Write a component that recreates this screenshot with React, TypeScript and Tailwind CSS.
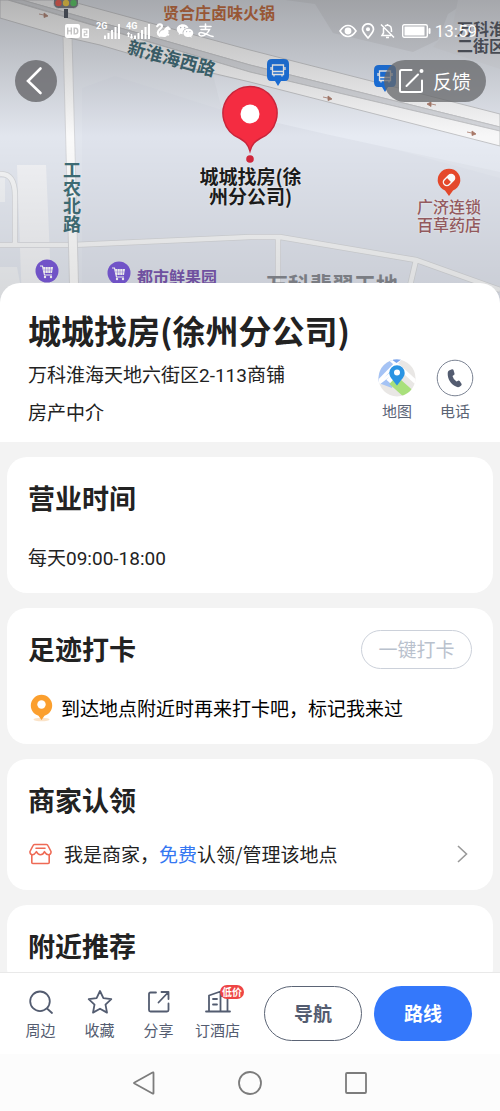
/**
 * Place detail page: map header, info sheet, cards and bottom action bar
 */
import type { ReactNode } from 'react';
import { RiWechatFill } from 'react-icons/ri';

export default function PlaceDetailPage() {
  return (
    <div className="h-screen flex flex-col overflow-hidden bg-[#f3f3f3] text-[#222] font-['Noto_Sans_CJK_SC',sans-serif]">
      <main className="flex-1 min-h-0 overflow-hidden">
        <MapHeader />
        <PlaceSheet />

        <div className="flex flex-col gap-[15px] px-[7px] pt-[15px]">
          <Card title="营业时间">
            <p className="mt-[25px] text-[19px] leading-7">
              每天<Digits>09:00-18:00</Digits>
            </p>
          </Card>

          <Card
            title="足迹打卡"
            action={
              <button
                type="button"
                className="w-[111px] h-[39px] rounded-full border border-[#ccd1da] text-[19px] text-[#b9c1cd]"
              >
                一键打卡
              </button>
            }
          >
            <div className="mt-[25px] flex items-center gap-2">
              <CheckInPin />
              <p className="text-[19px] leading-7 text-black">到达地点附近时再来打卡吧，标记我来过</p>
            </div>
          </Card>

          <Card title="商家认领">
            <a href="#claim" className="mt-5 flex items-center">
              <ShopIcon />
              <span className="ml-3 text-[19px] leading-7">
                我是商家，<span className="text-[#3577f2]">免费</span>认领/管理该地点
              </span>
              <svg className="ml-auto w-5 h-5" viewBox="0 0 20 20" fill="none" stroke="#999" strokeWidth="1.6" aria-hidden="true">
                <path d="M6 2l8.500 8L6 18" />
              </svg>
            </a>
          </Card>

          <Card title="附近推荐" />
        </div>
      </main>

      <ActionBar />
      <SystemNav />
    </div>
  );
}

// leading-none keeps the second font from growing the line box
function Digits({ children }: { children: ReactNode }) {
  return <span className="leading-none font-['Roboto',sans-serif]">{children}</span>;
}

// ─── Map header ───────────────────────────────────────────────────────────────

function MapHeader() {
  return (
    <header className="relative h-[303px] overflow-hidden bg-[#e2e6ee]">
      {/* Map canvas, stays centered on the selected place */}
      <div className="absolute top-0 left-1/2 -translate-x-1/2 w-[500px] h-full font-bold whitespace-nowrap">
        <MapDrawing />
        <span className="absolute left-[163px] top-0 text-[16px] leading-6 text-[#c05a26]">贤合庄卤味火锅</span>
        <span className="absolute left-[127px] top-[45px] rotate-[15deg] text-[18px] leading-6 text-[#31606d]">新淮海西路</span>
        <span className="absolute left-[63px] top-[160px] w-[18px] whitespace-normal text-[18px] leading-[18px] text-[#3f6d76]">工农北路</span>
        <span className="absolute left-[199px] top-[166px] w-[103px] text-center text-[19px] leading-5 text-[#1c1c1c] [text-shadow:0_0_2px_#fff]">
          城城找房(徐
          <br />
          州分公司)
        </span>
        <span className="absolute left-[417px] top-[197px] text-[16px] leading-[18px] font-medium text-[#9a5e63] [text-shadow:0_0_2px_#fff]">
          广济连锁
          <br />
          百草药店
        </span>
        <span className="absolute left-[457px] top-[20px] text-[16px] leading-[17px] text-[#444954]">
          万科淮海
          <br />
          二街区
        </span>
        <span className="absolute left-[137px] top-[264px] text-[16px] leading-6 text-[#7958ae]">都市鲜果园</span>
        <span className="absolute left-[266px] top-[271px] text-[22px] leading-6 text-[#85888f]">万科翡翠天地</span>
      </div>
      <div className="absolute inset-0 bg-linear-to-b from-[#505050]/40 via-transparent via-45% to-black/10" />
      <div className="absolute top-[85px] left-1/2 -translate-x-1/2">
        <SelectedPin />
      </div>

      <div className="relative">
        <StatusBar />
        <div className="mt-5 pl-[15px] pr-[14px] flex justify-between">
          <button type="button" aria-label="返回" className="w-[42px] h-[42px] rounded-full bg-[#66676a]/80 flex items-center justify-center">
            <svg className="w-[42px] h-[42px]" viewBox="0 0 42 42" fill="none" stroke="#fff" strokeWidth="2.600" strokeLinecap="round" aria-hidden="true">
              <path d="M25.500 8.500L13 21l12.500 12" />
            </svg>
          </button>
          <button type="button" className="w-[102px] h-[42px] rounded-full bg-[#66676a]/75 flex items-center pl-[14px] gap-[9px] text-[19px] text-white">
            <svg className="w-[26px] h-[26px]" viewBox="0 0 26 26" fill="none" stroke="#fff" strokeWidth="2" strokeLinecap="round" strokeLinejoin="round" aria-hidden="true">
              <path d="M13.500 2H3.500Q2 2 2 3.500v19Q2 24 3.500 24h19q1.500 0 1.500-1.500V12.500M8.500 18L20 6.500" />
              <circle cx="23.500" cy="3" r="1" fill="#fff" />
            </svg>
            反馈
          </button>
        </div>
      </div>
    </header>
  );
}

function StatusBar() {
  return (
    <div className="h-10 pt-[21px] pl-[65px] pr-[23px] flex items-center text-white">
      <svg className="w-[25px] h-4" viewBox="0 0 25 16" aria-hidden="true">
        <path fill="#fff" fillRule="evenodd" d="M2 1h11q2 0 2 2v10q0 2-2 2H2q-2 0-2-2V3Q0 1 2 1ZM2 4.500v7h1.400V8.600h2.200v2.900H7v-7H5.600v2.800H3.400V4.500ZM8.500 4.500v7h2q3 0 3-3.500t-3-3.500ZM10 5.800q2 0 2 2.200t-2 2.200Z" />
        <path fill="#fff" fillRule="evenodd" d="M18 5.500h5q1 0 1 1V14q0 1-1 1h-5q-1 0-1-1V6.500q0-1 1-1ZM18.700 7.200v1h2.400v1.500h-2.400v3.500h3.700v-1h-2.500v-1.500h2.500V7.200Z" />
      </svg>
      <Signal label="2G" className="ml-[6px]" />
      <Signal label="4G" className="ml-[6px]" data />
      <svg className="ml-[6px] w-[15px] h-[15px]" viewBox="0 0 15 15" aria-hidden="true">
        <path d="M1.200 3.200C2.500.8 5.800.9 6 3.200c.2 2.300-4.200 3-4.200 6.300 0 1.500.7 2.500 1.700 3" fill="none" stroke="#fff" strokeWidth="2.200" strokeLinecap="round" />
        <path d="M3 13.500c-.5-3.500 1.500-6.500 5-6.500.5-2 1.800-3.200 3.300-3.300l.7-1.200.8 1.400c1.200.4 1.900 1.300 2.100 2.400-.8.700-1.800.8-2.700.8.600 1.200.6 2.600 0 3.700l1.300.7-1 1.300-1.500-.4c-.6 1-1.600 1.700-3 1.700Z" fill="#fff" />
      </svg>
      <RiWechatFill className="ml-[5px] w-[18px] h-[18px]" aria-hidden="true" />
      <svg className="ml-1 w-[16px] h-[15px]" viewBox="0 0 16 15" fill="none" stroke="#fff" strokeWidth="1.600" strokeLinecap="round" aria-hidden="true">
        <path d="M2 3.500h11M7.500 1v5.500M3 6.500h8.500C10 10 6.500 13 3.500 13c-3 0-3.500-3.500-.5-3.500 3.500 0 7.500 3.200 12 4" />
      </svg>

      <div className="ml-auto flex items-center">
        <svg className="w-[18px] h-4" viewBox="0 0 18 16" fill="none" stroke="#fff" strokeWidth="1.600" aria-hidden="true">
          <path d="M1 8q3.500-5.500 8-5.500T17 8q-3.500 5.500-8 5.500T1 8Z" />
          <circle cx="9" cy="8" r="2.600" fill="#fff" />
        </svg>
        <svg className="ml-1 w-[14px] h-4" viewBox="0 0 14 16" fill="none" stroke="#fff" strokeWidth="1.700" aria-hidden="true">
          <path d="M7 15C3.500 11 1.500 9 1.500 6.300a5.500 5.500 0 0 1 11 0C12.500 9 10.500 11 7 15Z" />
          <circle cx="7" cy="6.300" r="1.200" fill="#fff" />
        </svg>
        <svg className="ml-[5px] w-[15px] h-4" viewBox="0 0 15 16" fill="none" stroke="#fff" strokeWidth="1.500" aria-hidden="true">
          <path d="M3.500 5v5L2 12.500h9M5 3.200C6 2 9 2 10.500 3.500 11.500 4.500 11.500 6 11.500 9M7.500 1v1.500M6 14.500h3M1 1.500l13 13" />
        </svg>
        <svg className="ml-[7px] w-[29px] h-[14px]" viewBox="0 0 29 14" aria-hidden="true">
          <rect x=".7" y=".7" width="24.600" height="12.600" rx="1.500" fill="none" stroke="#fff" strokeWidth="1.400" />
          <rect x="2.500" y="2.500" width="20" height="9" fill="#fff" />
          <rect x="26.500" y="4" width="2" height="6" rx="1" fill="#fff" />
        </svg>
        <time className="ml-1 text-[17px] leading-5 font-['Roboto',sans-serif]">13:59</time>
      </div>
    </div>
  );
}

function Signal({ label, className, data }: { label: string; className: string; data?: boolean }) {
  return (
    <span className={`relative w-[24px] h-4 ${className}`}>
      <span className="absolute left-0 -top-[2px] text-[9px] leading-[10px] font-bold font-['Roboto',sans-serif]">{label}</span>
      <svg className="w-full h-full" viewBox="0 0 24 16" fill="#fff" aria-hidden="true">
        <path d="M8 12.500h2V16H8zM11.500 10h2v6h-2zM15 7h2v9h-2zM18.500 4h2v12h-2zM22 1h2v15h-2z" />
        {data && <path d="M2.500 9L.5 11.300h1.300V14h1.400v-2.700h1.300zM5.500 16l2-2.500H6.200V11H4.800v2.500H3.500z" />}
      </svg>
    </span>
  );
}

function MapDrawing() {
  return (
    <svg className="absolute inset-0 w-[500px] h-[303px]" viewBox="0 0 500 303" fill="none" aria-hidden="true">
      {/* Blocks */}
      <path d="M82 303V88l33-12 107 34h28L500 178v125Z" fill="#dfe3ec" />
      <path d="M285 0l30 4 18 29 80 19 25-12 10-26 22-14Z" fill="#d6d9e0" />
      <path d="M458 0l-5 25-20 22 67 22V0Z" fill="#dfe2e9" />
      <path d="M213 75l37 7 250 64v26L330 135 222 110Z" fill="#e7ebf3" />
      <path d="M17 165h29l6 138H22Z" fill="#f0f1f4" />
      <path d="M0 178h5v24H0ZM0 267h17l3 16v20H0Z" fill="#eef0f3" />

      {/* Minor roads */}
      <g stroke="#d3d5d8" strokeWidth="6">
        <path d="M0 174q15-1 15 22v48" />
        <path d="M0 245h72l178-8h30l136 23 84 30M278 238v65M416 260l-10 43" />
      </g>
      <g stroke="#f3f4f5" strokeWidth="4.500">
        <path d="M0 174q15-1 15 22v48" />
        <path d="M0 245h72l178-8h30l136 23 84 30M278 238v65M416 260l-10 43" />
      </g>
      <path d="M63 36h9l7 267h-9Z" fill="#fafafa" stroke="#cfd1d4" strokeWidth=".8" />

      {/* Main road, two carriageways */}
      <g stroke="#c3c4c7" strokeWidth="1">
        <path d="M66 0l184 50 250 64v13L250 65 22 0Z" fill="#f7f7f8" />
        <path d="M22 0l228 65 250 62v4L250 72 30 6 8 0Z" fill="#d5d7dc" />
        <path d="M8 0L250 72l250 59v15L250 82 127 53 100 45 65 37 0 18V0Z" fill="#f7f7f8" />
      </g>
      <g stroke="#a87968" fill="#a87968" strokeWidth=".8">
        <path d="M39 14l7 1.500M44 13l4 3-4 1.500ZM323 97l7 1.500M328 96l4 3-4 1.500ZM467 132l7 1.500M472 131l4 3-4 1.500ZM436 105l-7-1.500M431 102l-4 2 4 2.500Z" />
      </g>

      {/* Traffic light */}
      <path d="M64 8h4v10h-4z" fill="#39404f" />
      <rect x="53.500" y="-5" width="25" height="13.500" rx="5" fill="#6b7079" stroke="#e4e7ec" />
      <circle cx="58.500" cy="3" r="3.200" fill="#f2483b" />
      <circle cx="66" cy="3" r="3.200" fill="#f8c92c" />
      <circle cx="73.500" cy="3" r="3.200" fill="#45c552" />

      <BusStop x={267} y={59} />
      <BusStop x={374} y={65} />

      {/* Pharmacy */}
      <path d="M449 196l-4-5.500a11.300 11.300 0 1 1 8 0Z" fill="#ea4a2c" />
      <g transform="rotate(-45 449 180)">
        <rect x="442.500" y="176.500" width="13" height="7" rx="3.500" stroke="#fff" strokeWidth="1.400" />
        <path d="M449 176.500h3q3.500 0 3.500 3.500t-3.500 3.500h-3Z" fill="#fff" />
      </g>

      <Cart x={47} y={271} />
      <Cart x={119} y={273} />
    </svg>
  );
}

function BusStop({ x, y }: { x: number; y: number }) {
  return (
    <g transform={`translate(${x} ${y})`}>
      <path d="M5 0h12q5 0 5 5v12q0 5-4 5h-4l-3 5-3-5H4q-4 0-4-5V5q0-5 5-5Z" fill="#0f70ea" />
      <path d="M5.500 6h11v9.500h-11ZM5.500 12.500h11M7 15.500v2M15 15.500v2M4 8v3M18 8v3" stroke="#fff" strokeWidth="1.300" />
    </g>
  );
}

function Cart({ x, y }: { x: number; y: number }) {
  return (
    <g transform={`translate(${x} ${y})`}>
      <circle r="11.500" fill="#7a5ad8" />
      <path d="M-4-4H6L5 2h-8Z" fill="#fff" />
      <path d="M-7-5h2.500l2 9H5" stroke="#fff" strokeWidth="1.200" />
      <circle cx="-2" cy="6" r="1.200" fill="#fff" />
      <circle cx="4" cy="6" r="1.200" fill="#fff" />
      <path d="M-1.500-4v6M1-4v6M3.500-4v6M-4-1h9.500" stroke="#7a5ad8" strokeWidth=".4" />
    </g>
  );
}

function SelectedPin() {
  return (
    <svg className="w-[58px] h-[80px]" viewBox="0 0 58 80" aria-hidden="true">
      <path d="M29 66c-2-7-5-9.500-10-12.500A27 27 0 1 1 39 53.500c-5 3-8 5.500-10 12.500Z" fill="#f42c41" stroke="#c9253a" strokeWidth="1.500" />
      <circle cx="29" cy="29" r="9.500" fill="#fff" />
      <circle cx="29" cy="74" r="3.800" fill="#d0273b" />
    </svg>
  );
}

// ─── Place info ───────────────────────────────────────────────────────────────

function PlaceSheet() {
  return (
    <section className="relative -mt-5 rounded-t-[20px] bg-white pt-[27px] pb-4 pl-7 pr-[26px]">
      <h1 className="text-[33px] leading-10 font-bold">城城找房(徐州分公司)</h1>
      <div className="mt-[9px] flex justify-between">
        <div className="pt-px text-[19px] leading-7">
          <p>
            万科淮海天地六街区<Digits>2-113</Digits>商铺
          </p>
          <p className="mt-[10px]">房产中介</p>
        </div>
        <div className="flex gap-5 text-[15px] leading-5 text-[#5b6475]">
          <button type="button" className="flex flex-col items-center gap-1">
            <MapIcon />
            地图
          </button>
          <button type="button" className="flex flex-col items-center gap-1">
            <svg className="w-[38px] h-[38px]" viewBox="0 0 38 38" aria-hidden="true">
              <circle cx="19" cy="19" r="17.800" fill="none" stroke="#7b8393" strokeWidth="1" />
              <path d="M13 11.500l3-1.300q1-.3 1.500.8l1 3.500q.2 1-.6 1.500l-1.400 1q.8 3.500 4 5.500l1.600-.8q1-.3 1.600.4l1.800 2.600q.5 1-.3 1.700l-1.200 1.100q-1.700 1.200-4 .1C14.500 25 11.500 20 11.700 14q.1-1.700 1.300-2.500Z" fill="#535c70" />
            </svg>
            电话
          </button>
        </div>
      </div>
    </section>
  );
}

function MapIcon() {
  return (
    <svg className="w-[38px] h-[38px]" viewBox="0 0 38 38" aria-hidden="true">
      <clipPath id="map-icon">
        <circle cx="19" cy="19" r="18.500" />
      </clipPath>
      <g clipPath="url(#map-icon)">
        <rect width="38" height="38" fill="#e9e7e5" />
        <path d="M0 0h22L0 22Z" fill="#a5c3f5" />
        <path d="M-2 23L13 7l5 8-4 14Z" fill="#a5c3f5" />
        <path d="M10 19L36 42" stroke="#fff" strokeWidth="5" />
        <path d="M-3 26L28-6" stroke="#fff" strokeWidth="3" />
        <path d="M8-4l32 29" stroke="#fff" strokeWidth="4" />
        <path d="M-4 28L14 14" stroke="#fff" strokeWidth="3" />
        <path d="M13 0h11l-5.500 4Z" fill="#7aa5ee" />
        <path d="M15 21l18 16" stroke="#a9e07c" strokeWidth="11" />
      </g>
      <path d="M19 26.500C14 20 11.300 17.500 11.300 14a7.700 7.700 0 0 1 15.400 0c0 3.500-2.700 6-7.700 12.500Z" fill="#2a94e3" />
      <circle cx="19" cy="13.500" r="3" fill="#fff" />
    </svg>
  );
}

function Card({ title, action, children }: { title: string; action?: ReactNode; children?: ReactNode }) {
  return (
    <section className="rounded-[20px] bg-white pt-[21px] pb-[22px] px-[21px]">
      <div className="h-10 flex items-center justify-between">
        <h2 className="text-[27px] leading-10 font-bold">{title}</h2>
        {action}
      </div>
      {children}
    </section>
  );
}

function CheckInPin() {
  return (
    <svg className="w-6 h-7 ml-[1px]" viewBox="0 0 24 28" aria-hidden="true">
      <ellipse cx="12.500" cy="25.500" rx="8" ry="1.800" fill="#fbe3c8" />
      <path d="M12.500 26l-3-4.300C5 20.500 1.800 16.500 1.800 11.500a10.700 10.700 0 0 1 21.400 0c0 5-3.200 9-7.700 10.200Z" fill="#fb9f2e" />
      <circle cx="12.500" cy="10.500" r="4.200" fill="#fff" />
    </svg>
  );
}

function ShopIcon() {
  return (
    <svg className="w-6 h-6" viewBox="0 0 24 24" fill="none" stroke="#ee6a55" strokeWidth="1.600" strokeLinejoin="round" strokeLinecap="round" aria-hidden="true">
      <path d="M6.500 2.500h12q1 0 1.400 1L23 9.500c.3 2-1 3.200-2.600 3.200-1.700 0-2.700-1-4-3-.8 2-2 3-4 3s-3-1-4-3c-1.200 2-2.200 3-3.800 3C3 12.700 1.700 11.500 2 9.500l3.100-6q.4-1 1.400-1ZM8 6.200h9M3.800 13v7.500q0 1 1 1h15.400q1 0 1-1V13" />
    </svg>
  );
}

// ─── Bottom bars ──────────────────────────────────────────────────────────────

const tabs = [
  { label: '周边', icon: <path d="M12 2.500a9.800 9.800 0 1 0 0 19.600 9.800 9.800 0 0 0 0-19.600ZM19 19.500l5 4.500" /> },
  { label: '收藏', icon: <path d="M13 2l3.400 7.200 7.900 1-5.800 5.500 1.500 7.900-7-3.900-7 3.900 1.500-7.900-5.800-5.500 7.900-1Z" /> },
  { label: '分享', icon: <path d="M10 3.500H4.500q-1.500 0-1.500 1.500v16q0 1.500 1.500 1.500H21q1.500 0 1.500-1.500V14.500M12.500 13.500L22.500 3M15.500 3h7v7" /> },
  { label: '订酒店', badge: '低价', icon: <path d="M1 22.500h24M4 22.500V6.500L15.500 2.500v20M15.500 7H22.500v15.500M8 10h4M8 15.500h4" /> },
];

function ActionBar() {
  return (
    <footer className="h-[82px] flex items-center bg-white border-t border-[#e9e9e9] pl-[11px] pr-7">
      <nav className="flex pt-1">
        {tabs.map((tab) => (
          <a key={tab.label} href="#" className="relative w-[59px] flex flex-col items-center gap-[3px] text-[15px] leading-6 text-[#535c70]">
            <svg className="w-[26px] h-[26px]" viewBox="0 0 26 26" fill="none" stroke="currentColor" strokeWidth="1.800" strokeLinejoin="round" strokeLinecap="round" aria-hidden="true">
              {tab.icon}
            </svg>
            {tab.label}
            {tab.badge && (
              <span className="absolute left-8 -top-1 w-6 h-[14px] rounded-full bg-[#ee4545] text-white text-center text-[10px] leading-[14px] font-bold">
                {tab.badge}
              </span>
            )}
          </a>
        ))}
      </nav>
      <div className="ml-auto flex gap-3 text-[19px] font-bold">
        <button type="button" className="w-[98px] h-[55px] rounded-full border border-[#5b6475] text-[#535c70]">
          导航
        </button>
        <button type="button" className="w-[98px] h-[55px] rounded-full bg-[#3478fb] text-white">
          路线
        </button>
      </div>
    </footer>
  );
}

function SystemNav() {
  const buttons = [
    { label: '后退', shape: <path d="M21.500 2v20q0 1-1 .5L2.500 12.500q-1-.5 0-1l18-10q1-.5 1 .5Z" /> },
    { label: '主屏幕', shape: <circle cx="12" cy="12" r="11" /> },
    { label: '最近任务', shape: <rect x="2" y="2" width="20" height="20" rx="1" /> },
  ];

  return (
    <div className="h-[57px] flex items-center justify-center gap-[82px] bg-[#fcfcfc]">
      {buttons.map((button) => (
        <button key={button.label} type="button" aria-label={button.label}>
          <svg className="w-6 h-6" viewBox="0 0 24 24" fill="none" stroke="#7c7c7c" strokeWidth="1.800" aria-hidden="true">
            {button.shape}
          </svg>
        </button>
      ))}
    </div>
  );
}
